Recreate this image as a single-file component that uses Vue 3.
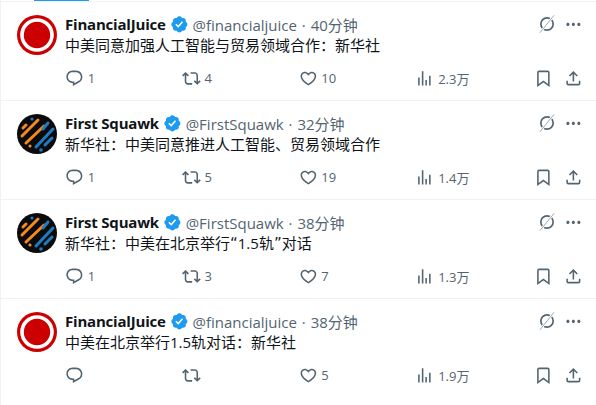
<template>
  <div class="timeline">
    <div class="tab-line"></div>
    <article v-for="t in tweets" :key="t.id" class="tweet">
      <svg v-if="t.logo === 'juice'" class="avatar" viewBox="0 0 40 40">
        <circle cx="20" cy="20" r="20" fill="#cc0000" />
        <circle cx="20" cy="20" r="16.8" fill="#fff" />
        <circle cx="20" cy="20" r="13.2" fill="#cc0000" />
      </svg>
      <svg v-else class="avatar" viewBox="0 0 40 40">
        <circle cx="20" cy="20" r="20" fill="#0b0b0b" />
        <g stroke-width="3" stroke-linecap="round" fill="none">
          <path d="M6 14 L9 11 M5 22 L21 6 M9 29 L27 12" stroke="#f58a1f" />
          <path d="M26 15 L31 9 M19 33 L36 15 M28 31 L35 24" stroke="#1d7cc4" />
        </g>
        <circle cx="15" cy="5" r="1.6" fill="#1d7cc4" />
        <circle cx="24" cy="36" r="1.8" fill="#1d7cc4" />
        <circle cx="13" cy="32" r="1.6" fill="#f58a1f" />
      </svg>

      <div class="body">
        <div class="head">
          <span class="name">{{ t.name }}</span>
          <svg class="badge" viewBox="0 0 24 24"><path :d="icons.verified" /></svg>
          <span class="meta">{{ t.handle }} · {{ t.time }}</span>
          <span class="head-icons">
            <svg class="slash" viewBox="0 0 24 24">
              <circle cx="12" cy="12" r="7.4" fill="none" stroke="#536471" stroke-width="2" />
              <path d="M20.5 1.5 L3.5 22.5" stroke="#fff" stroke-width="3" />
              <path d="M20.5 1.5 L3.5 22.5" stroke="#8b98a5" stroke-width="1" />
            </svg>
            <svg class="more" viewBox="0 0 24 24"><path :d="icons.more" /></svg>
          </span>
        </div>
        <div class="text">
          <span v-for="(part, i) in splitQuotes(t.text)" :key="i" :class="{ quote: i % 2 === 1 }">{{ part }}</span>
        </div>
        <div class="actions">
          <span class="action"><svg viewBox="0 0 24 24"><path :d="icons.reply" /></svg>{{ t.reply }}</span>
          <span class="action"><svg viewBox="0 0 24 24"><path :d="icons.retweet" /></svg>{{ t.retweet }}</span>
          <span class="action"><svg viewBox="0 0 24 24"><path :d="icons.like" /></svg>{{ t.like }}</span>
          <span class="action"><svg viewBox="0 0 24 24"><path :d="icons.views" /></svg>{{ t.views }}</span>
          <span class="end">
            <svg viewBox="0 0 24 24"><path :d="icons.bookmark" /></svg>
            <svg viewBox="0 0 24 24"><path :d="icons.share" /></svg>
          </span>
        </div>
      </div>
    </article>
  </div>
</template>

<script setup>
const juice = { logo: "juice", name: "FinancialJuice", handle: "@financialjuice" };
const squawk = { logo: "squawk", name: "First Squawk", handle: "@FirstSquawk" };

const tweets = [
  { id: 1, ...juice, time: "40分钟", text: "中美同意加强人工智能与贸易领域合作：新华社", reply: "1", retweet: "4", like: "10", views: "2.3万" },
  { id: 2, ...squawk, time: "32分钟", text: "新华社：中美同意推进人工智能、贸易领域合作", reply: "1", retweet: "5", like: "19", views: "1.4万" },
  { id: 3, ...squawk, time: "38分钟", text: "新华社：中美在北京举行“1.5轨”对话", reply: "1", retweet: "3", like: "7", views: "1.3万" },
  { id: 4, ...juice, time: "38分钟", text: "中美在北京举行1.5轨对话：新华社", reply: "", retweet: "", like: "5", views: "1.9万" },
];

// the curly quotes are wider than the latin font's, they get their own font
const splitQuotes = (text) => text.split(/([“”])/);

const icons = {
  verified: "M22.25 12c0-1.43-.88-2.67-2.19-3.34.46-1.39.2-2.9-.81-3.91s-2.52-1.27-3.91-.81c-.66-1.31-1.91-2.19-3.34-2.19s-2.67.88-3.33 2.19c-1.4-.46-2.91-.2-3.92.81s-1.26 2.52-.8 3.91c-1.31.67-2.2 1.91-2.2 3.34s.89 2.67 2.2 3.34c-.46 1.39-.21 2.9.8 3.91s2.52 1.26 3.91.81c.67 1.31 1.91 2.19 3.34 2.19s2.68-.88 3.34-2.19c1.39.45 2.9.2 3.91-.81s1.27-2.52.81-3.91c1.31-.67 2.19-1.91 2.19-3.34zm-11.71 4.2L6.8 12.46l1.41-1.42 2.26 2.26 4.8-5.23 1.47 1.36-6.2 6.77z",
  more: "M3 12c0-1.1.9-2 2-2s2 .9 2 2-.9 2-2 2-2-.9-2-2zm9 2c1.1 0 2-.9 2-2s-.9-2-2-2-2 .9-2 2 .9 2 2 2zm7 0c1.1 0 2-.9 2-2s-.9-2-2-2-2 .9-2 2 .9 2 2 2z",
  reply: "M1.751 10c0-4.42 3.584-8 8.005-8h4.366c4.49 0 8.129 3.64 8.129 8.13 0 2.96-1.607 5.68-4.196 7.11l-8.054 4.46v-3.69h-.067c-4.49.1-8.183-3.51-8.183-8.01zm8.005-6c-3.317 0-6.005 2.69-6.005 6 0 3.37 2.77 6.08 6.138 6.01l.351-.01h1.761v2.3l5.087-2.81c1.951-1.08 3.163-3.13 3.163-5.36 0-3.39-2.744-6.13-6.129-6.13H9.756z",
  retweet: "M4.5 3.88l4.432 4.14-1.364 1.46L5.5 7.55V16c0 1.1.896 2 2 2H13v2H7.5c-2.209 0-4-1.79-4-4V7.55L1.432 9.48.068 8.02 4.5 3.88zM16.5 6H11V4h5.5c2.209 0 4 1.79 4 4v8.45l2.068-1.93 1.364 1.46-4.432 4.14-4.432-4.14 1.364-1.46 2.068 1.93V8c0-1.1-.896-2-2-2z",
  like: "M16.697 5.5c-1.222-.06-2.679.51-3.89 2.16l-.805 1.09-.806-1.09C9.984 6.01 8.526 5.44 7.304 5.5c-1.243.07-2.349.78-2.91 1.91-.552 1.12-.633 2.78.479 4.82 1.074 1.97 3.257 4.27 7.129 6.61 3.87-2.34 6.052-4.64 7.126-6.61 1.111-2.04 1.03-3.7.477-4.82-.561-1.13-1.666-1.84-2.908-1.91zm4.187 7.69c-1.351 2.48-4.001 5.12-8.379 7.67l-.503.3-.504-.3c-4.379-2.55-7.029-5.19-8.382-7.67-1.36-2.5-1.41-4.86-.514-6.67.887-1.79 2.647-2.91 4.601-3.01 1.651-.09 3.368.56 4.798 2.01 1.429-1.45 3.146-2.1 4.796-2.01 1.954.1 3.714 1.22 4.601 3.01.896 1.81.846 4.17-.514 6.67z",
  views: "M8.75 21V3h2v18h-2zM18 21V8.5h2V21h-2zM4 21l.004-10h2L6 21H4zm9.248 0v-7h2v7h-2z",
  bookmark: "M4 4.5C4 3.12 5.119 2 6.5 2h11C18.881 2 20 3.12 20 4.5v18.44l-8-5.71-8 5.71V4.5zM6.5 4c-.276 0-.5.22-.5.5v14.56l6-4.29 6 4.29V4.5c0-.28-.224-.5-.5-.5h-11z",
  share: "M12 2.59l5.7 5.7-1.41 1.42L13 6.41V16h-2V6.41l-3.3 3.3-1.41-1.42L12 2.59zM21 15l-.02 3.51c0 1.38-1.12 2.49-2.5 2.49H5.5C4.11 21 3 19.88 3 18.5V15h2v3.5c0 .28.22.5.5.5h12.98c.28 0 .5-.22.5-.5L19 15h2z",
};
</script>

<style>
html, body {
  background: #fff;
  overflow: hidden;
}
</style>

<style scoped>
.timeline {
  width: 596px;
  height: 405px;
  box-sizing: border-box;
  border-left: 1px solid #eff3f4;
  font-family: "Open Sans", "Noto Sans CJK SC", sans-serif;
  overflow: hidden;
}
.tab-line {
  height: 1px;
  margin-left: 33px;
  width: 55px;
  background: #1d9bf0;
}
.tweet {
  display: flex;
  gap: 8px;
  height: 99px;
  box-sizing: border-box;
  padding: 13px 13px 0 16px;
  border-top: 1px solid #eff3f4;
}
.avatar {
  width: 40px;
  height: 40px;
  flex: none;
}
.body {
  flex: 1;
  min-width: 0;
}
.head {
  display: flex;
  align-items: center;
  height: 20px;
  margin-top: -1px;
}
.name {
  font-size: 15px;
  font-weight: 700;
  letter-spacing: -0.2px;
  color: #0f1419;
}
.badge {
  width: 18.75px;
  height: 18.75px;
  margin-left: 4px;
  fill: #1d9bf0;
}
.meta {
  margin-left: 4px;
  font-size: 15px;
  word-spacing: 1px;
  color: #536471;
}
.head-icons {
  margin-left: auto;
  display: flex;
  align-items: center;
  gap: 7px;
}
.slash {
  width: 20px;
  height: 20px;
}
.more {
  width: 18.75px;
  height: 18.75px;
  fill: #536471;
}
.text {
  margin-top: 1px;
  height: 20px;
  line-height: 20px;
  font-size: 15px;
  color: #0f1419;
}
.quote {
  font-family: "DejaVu Sans", sans-serif;
}
.actions {
  display: grid;
  grid-template-columns: repeat(4, 116.8px) 1fr;
  align-items: center;
  margin-top: 13px;
  height: 20px;
}
.action {
  display: flex;
  align-items: center;
  gap: 4px;
  font-size: 13px;
  color: #536471;
}
.action svg,
.end svg {
  width: 18.75px;
  height: 18.75px;
  fill: #536471;
  flex: none;
}
.end {
  display: flex;
  justify-content: flex-end;
  gap: 11.25px;
}
</style>
